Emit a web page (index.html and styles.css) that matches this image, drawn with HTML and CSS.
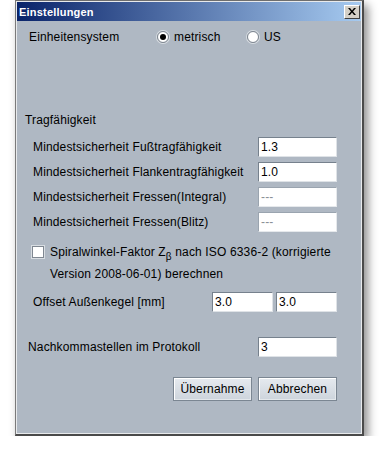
FILE: index.html
```html
<!DOCTYPE html>
<html>
<head>
<meta charset="utf-8">
<title>Einstellungen</title>
<link rel="stylesheet" href="styles.css">
</head>
<body>
<div class="window">
  <div class="frame">
    <div class="titlebar">
      <span class="title">Einstellungen</span>
      <span class="close"><svg width="8" height="7" viewBox="0 0 8 7"><path d="M0 0h2l2 2.5L6 0h2L5 3.5 8 7H6L4 4.5 2 7H0l3-3.5z" fill="#000"/></svg></span>
    </div>
    <div class="content">
      <div class="units">
        <span class="units-label">Einheitensystem</span>
        <span class="opt"><span class="radio checked"></span><span>metrisch</span></span>
        <span class="opt"><span class="radio"></span><span>US</span></span>
      </div>
      <div class="section">Tragfähigkeit</div>
      <div class="frow">
        <span class="lbl">Mindestsicherheit Fußtragfähigkeit</span>
        <span class="field">1.3</span>
      </div>
      <div class="frow">
        <span class="lbl">Mindestsicherheit Flankentragfähigkeit</span>
        <span class="field">1.0</span>
      </div>
      <div class="frow">
        <span class="lbl">Mindestsicherheit Fressen(Integral)</span>
        <span class="field disabled">---</span>
      </div>
      <div class="frow">
        <span class="lbl">Mindestsicherheit Fressen(Blitz)</span>
        <span class="field disabled">---</span>
      </div>
      <div class="check">
        <span class="boxwrap"><span class="box"></span></span>
        <span class="checktext">Spiralwinkel-Faktor Z<sub>β</sub> nach ISO 6336-2 (korrigierte<br>Version 2008-06-01) berechnen</span>
      </div>
      <div class="frow offset">
        <span class="lbl">Offset Außenkegel [mm]</span>
        <span class="field small">3.0</span>
        <span class="field small">3.0</span>
      </div>
      <div class="frow decimals">
        <span class="lbl">Nachkommastellen im Protokoll</span>
        <span class="field">3</span>
      </div>
      <div class="buttons">
        <span class="btn">Übernahme</span>
        <span class="btn">Abbrechen</span>
      </div>
    </div>
  </div>
</div>
</body>
</html>
```
FILE: styles.css
```css
html, body {
  margin: 0;
  padding: 0;
  background: #ffffff;
}
body {
  font-family: "Liberation Sans", Arial, sans-serif;
  font-size: 12px;
  letter-spacing: 0.15px;
  color: #000;
}
.window {
  margin-left: 15px;
  width: 346px;
  height: 433px;
  border-style: solid;
  border-color: #6e6e6e #4a4a4a #4a4a4a #7a7a7a;
  border-width: 1px 2px 2px 1px;
  box-shadow: 4px 5px 9px rgba(0, 0, 0, 0.45);
}
.frame {
  height: 431px;
  border: 1px solid #e8eaec;
  background: #afb8c3;
  display: flex;
  flex-direction: column;
}
.titlebar {
  height: 19px;
  background: linear-gradient(to right, #0a246a, #a6caf0);
  display: flex;
  align-items: center;
  justify-content: space-between;
  padding-left: 2px;
  padding-right: 1px;
}
.title {
  color: #fff;
  font-weight: bold;
  font-size: 11px;
  letter-spacing: 0.2px;
}
.close {
  width: 14px;
  height: 12px;
  background: #d4d0c8;
  border-style: solid;
  border-width: 1px;
  border-color: #ffffff #404040 #404040 #ffffff;
  display: flex;
  align-items: center;
  justify-content: center;
}
.content {
  display: flex;
  flex-direction: column;
  padding-right: 24px;
}
.units {
  margin-top: 6px;
  height: 20px;
  display: flex;
  align-items: center;
  padding-left: 12px;
}
.units-label {
  width: 128px;
}
.opt {
  width: 90px;
  display: flex;
  align-items: center;
  gap: 5px;
}
.radio {
  width: 10px;
  height: 10px;
  border-radius: 50%;
  border: 1px solid #7f8791;
  background: radial-gradient(circle at 50% 50%, #ffffff 60%, #e4e7ea 100%);
  box-shadow: 0 0 0 1px #d8dde2;
  display: flex;
  align-items: center;
  justify-content: center;
}
.radio.checked::after {
  content: "";
  width: 6px;
  height: 6px;
  border-radius: 50%;
  background: #000;
}
.section {
  margin-top: 63px;
  height: 20px;
  line-height: 20px;
  padding-left: 8px;
}
.frow {
  margin-top: 5px;
  height: 20px;
  display: flex;
  align-items: center;
  padding-left: 16px;
}
.section + .frow {
  margin-top: 7px;
}
.lbl {
  flex: 1;
}
.field {
  box-sizing: border-box;
  width: 79px;
  height: 20px;
  background: #fff;
  border-style: solid;
  border-width: 1px;
  border-color: #76818d #dfe3e7 #dfe3e7 #76818d;
  padding-left: 2px;
  line-height: 18px;
}
.field.disabled {
  color: #8a8f96;
  border-color: #9aa4af #e6e9ec #e6e9ec #9aa4af;
}
.field.small {
  width: 61px;
}
.field.small + .field.small {
  margin-left: 3px;
}
.check {
  margin-top: 9px;
  display: flex;
  padding-left: 15px;
  line-height: 22px;
}
.boxwrap {
  height: 22px;
  display: flex;
  align-items: center;
  margin-right: 6px;
}
.box {
  width: 10px;
  height: 10px;
  background: #fff;
  border: 1px solid #7f8791;
  box-shadow: 0 0 0 1px #d8dde2;
}
.checktext sub {
  font-size: 10px;
  line-height: 0;
  vertical-align: -4px;
}
.offset {
  margin-top: 7px;
}
.decimals {
  margin-top: 25px;
  padding-left: 11px;
}
.buttons {
  margin-top: 20px;
  display: flex;
  justify-content: flex-end;
  gap: 6px;
}
.btn {
  box-sizing: border-box;
  width: 79px;
  height: 24px;
  border: 1px solid #7b8692;
  box-shadow: inset 1px 1px 0 #ffffff, inset -1px -1px 0 #e4e8ec;
  background: linear-gradient(to bottom, #e6eaef, #cdd4dc);
  display: flex;
  align-items: center;
  justify-content: center;
}
```
